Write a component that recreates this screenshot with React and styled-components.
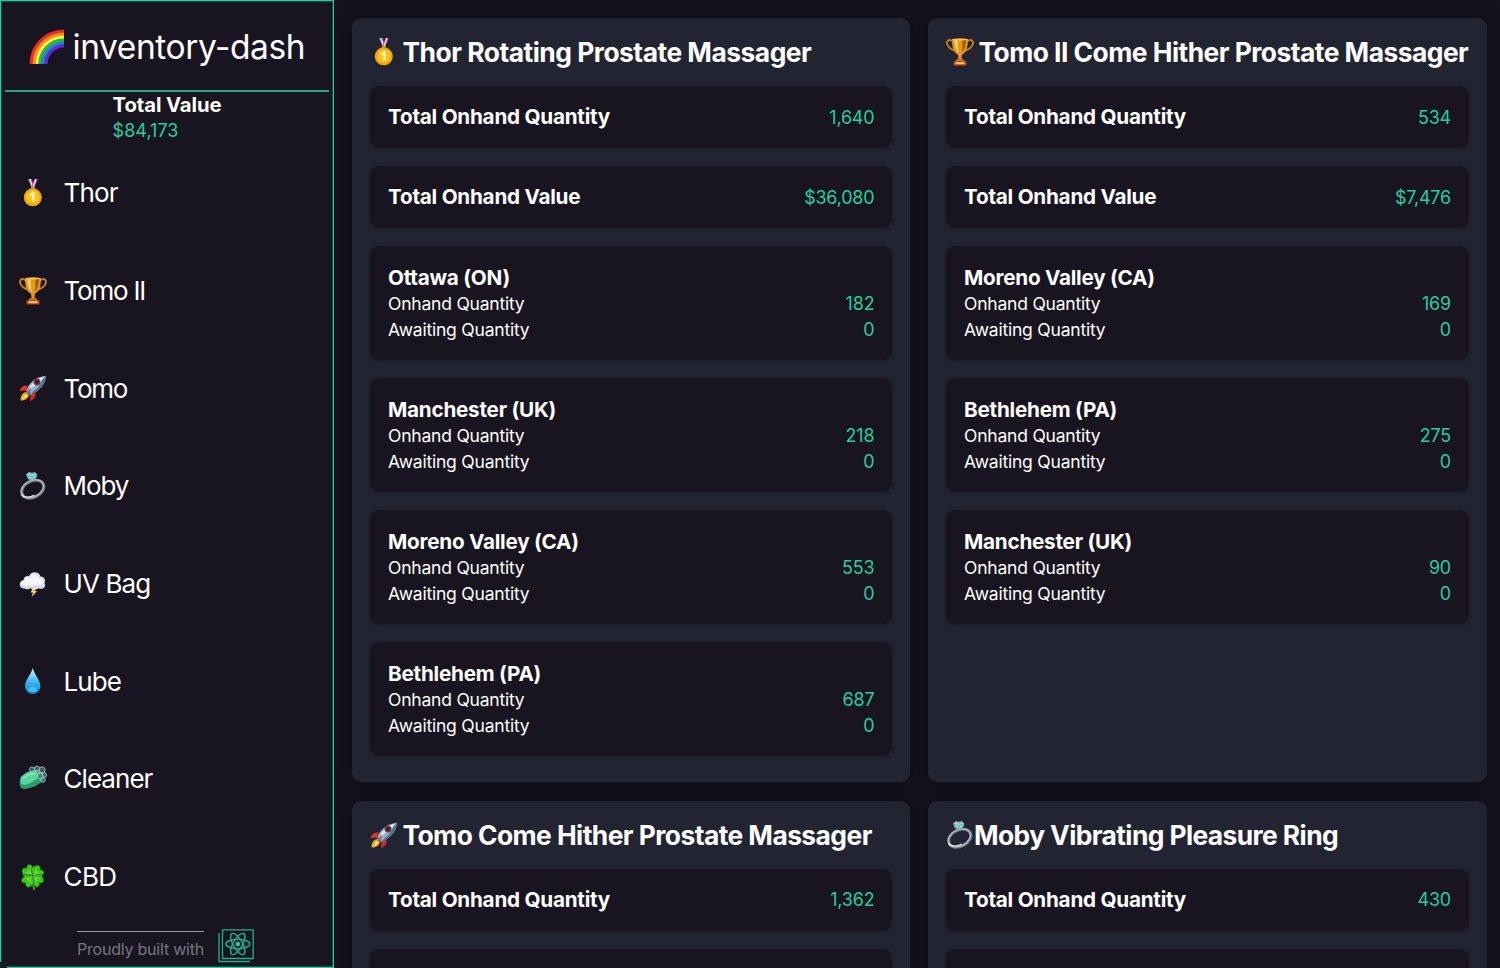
import React from "react";
import styled, { createGlobalStyle } from "styled-components";

const GlobalStyle = createGlobalStyle`
  * { box-sizing: border-box; }
  html, body { margin: 0; height: 968px; overflow: hidden; background: #16131e; }
  h1, h2, h3, p, ul { margin: 0; padding: 0; font-weight: inherit; }
  body { font-family: Inter, "Liberation Sans", sans-serif; color: #fff; }
`;

const teal = "#20cfa0";
const ink = "#181520";

const Page = styled.div`
  display: grid;
  grid-template-columns: 334px 1fr;
  width: 1500px;
  height: 968px;
  overflow: hidden;
`;

const Sidebar = styled.aside`
  position: relative;
  display: flex;
  flex-direction: column;
  padding: 0 4px;
  height: 968px;
  background: ${ink};
  border: 1px solid ${teal};
  box-shadow: inset 0 0 0 1px rgba(32, 207, 160, 0.3);

  &::after {
    content: "";
    position: absolute;
    left: -1px;
    bottom: -1px;
    width: 7px;
    height: 6px;
    background: #16191f;
  }
`;

const Brand = styled.header`
  display: flex;
  align-items: center;
  height: 91px;
  padding: 3px 0 0 24px;
  gap: 7.5px;
  border-bottom: 2px solid #20a48a;
`;

const BrandName = styled.h1`
  font-size: 33.5px;
  line-height: 40px;
  letter-spacing: -0.42px;
  white-space: nowrap;
`;

const Total = styled.section`
  align-self: center;
  height: 52px;
`;

const TotalLabel = styled.h2`
  font-size: 20.3px;
  line-height: 25px;
  font-weight: 700;
  letter-spacing: -0.1px;
`;

const TotalValue = styled.p`
  font-size: 18px;
  line-height: 27px;
  color: ${teal};
  letter-spacing: 0.03px;
`;

const Menu = styled.ul`
  list-style: none;
`;

const MenuItem = styled.li`
  display: flex;
  align-items: center;
  gap: 16.5px;
  height: 97.7px;
  padding-left: 14px;
  font-size: 26px;
  letter-spacing: ${(p) => p.$track}px;
  white-space: nowrap;
`;

const Credit = styled.footer`
  display: flex;
  gap: 14px;
  padding-left: 72px;
  margin-top: 3px;
`;

const CreditText = styled.p`
  height: 32px;
  margin-top: 2px;
  border-top: 1.5px solid #9a98a3;
  padding-top: 7px;
  font-size: 16px;
  line-height: 20px;
  letter-spacing: -0.22px;
  color: #777580;
  white-space: nowrap;
`;

const Board = styled.main`
  display: grid;
  grid-template-columns: 558px 558.6px;
  grid-template-rows: 764px 764px;
  gap: 18.6px 18px;
  padding: 18px;
`;

const Card = styled.section`
  display: flex;
  flex-direction: column;
  gap: 18px;
  padding: 18px;
  border-radius: 9px;
  background: #222432;
  box-shadow: 0 0 14px 2px rgba(8, 7, 14, 0.55);
`;

const CardTitle = styled.h2`
  display: flex;
  align-items: center;
  height: 32px;
  gap: ${(p) => (p.$tight ? 0 : 4.5)}px;
  font-size: 26.4px;
  font-weight: 700;
  letter-spacing: ${(p) => p.$track}px;
  white-space: nowrap;
`;

const Panel = styled.div`
  flex: none;
  height: ${(p) => (p.$tall ? 114 : 62)}px;
  padding: 18px;
  border-radius: 9px;
  background: ${ink};
  box-shadow: 0 1px 5px rgba(16, 14, 24, 0.3);
`;

const Row = styled.div`
  display: flex;
  justify-content: space-between;
  align-items: center;
  height: 26.7px;
`;

const PanelTitle = styled.h3`
  font-size: 20.7px;
  line-height: ${(p) => (p.$place ? 27 : 26)}px;
  margin-bottom: ${(p) => (p.$place ? -1.2 : 0)}px;
  font-weight: 700;
  letter-spacing: -0.24px;
`;

const Label = styled.span`
  font-size: 17.5px;
  letter-spacing: -0.21px;
`;

const Value = styled.span`
  margin-right: -0.4px;
  font-size: 18px;
  color: ${teal};
  letter-spacing: -0.22px;
`;

const Art = styled.svg`
  flex: none;
  display: block;
  overflow: visible;
  width: ${(p) => p.$w || 28}px;
  height: ${(p) => p.$h || 28}px;
`;

function Medal() {
  return (
    <Art viewBox="0 0 28 28">
      <path d="M8.8 0h4l3 9h-3z" fill="#7264b5" />
      <path d="M10 0h1.6l3 9h-1.5z" fill="#f2d4e1" />
      <path d="M18.8 0h-3.3l-3.4 9h3z" fill="#c75386" />
      <path d="M17.5 0h-1.3l-3 9h1.4z" fill="#eee5fa" />
      <rect x="11.6" y="8" width="4.4" height="3" rx="1" fill="#c68a18" />
      <circle cx="13.8" cy="18.3" r="9" fill="#f0a908" />
      <circle cx="13.8" cy="18" r="7.4" fill="#fcc21f" stroke="#e09c08" strokeWidth=".8" />
      <path d="M11.5 16.2l3-2v8" fill="none" stroke="#fff5ad" strokeWidth="2.3" />
    </Art>
  );
}

function Trophy() {
  return (
    <Art viewBox="0 0 28 28">
      <path d="M7 3.6C2-.2-.5 4 2 7.8c1.6 2.6 4.2 4 7.5 5M21 3.6c5-3.8 7.5.4 5 4.2-1.6 2.6-4.2 4-7.5 5" fill="none" stroke="#c87c13" strokeWidth="1.8" />
      <path d="M6 1h16c0 7-1.200 13.500-6.100 15.800L15.400 23h-2.800l-.5-6.200C7.200 14.500 6 8 6 1z" fill="#e5981b" />
      <path d="M8.500 2h3.200c-.2 5 0 9.500 1.300 13C9.500 12.500 8.600 7 8.500 2z" fill="#ffd765" />
      <path d="M16 2h4c-.2 5-1.300 10-4.200 12.500C16.700 10 16.500 6 16 2z" fill="#a95c0d" />
      <ellipse cx="14" cy="1.500" rx="8" ry="1.200" fill="#f7bd43" />
      <path d="M11 21h6l2.500 3.500h-11z" fill="#c57014" />
      <rect x="7.500" y="23.300" width="13" height="4.200" rx=".7" fill="#b64b18" />
      <rect x="9.500" y="24.200" width="9" height="2" fill="#ffc56a" />
    </Art>
  );
}

function Rocket() {
  return (
    <Art viewBox="0 0 28 28">
      <path d="M8.500 11.500C4.500 11 1.500 13 .5 17l6.500-.500z" fill="#e63524" />
      <path d="M16.500 19c.5 4-1.500 6.500-5.500 8l.5-6.500z" fill="#dd251f" />
      <path d="M7 18c-4 1-5.500 4-5.500 8.500C6 26.500 9 25 10 21z" fill="#f5a615" />
      <path d="M7 20c-2 1-3 3-3.500 5C6 24.500 7.500 23 8.500 21z" fill="#fff16a" />
      <path d="M7 17C10 9 16 3 27 1.800 27 10 20 17.500 11 21z" fill="#92b4ce" />
      <path d="M11 12.500C15 7 20 3.500 26 2.500c-2 3-8 8-14.500 12z" fill="#dbe9f2" />
      <path d="M8 16.500c2.500-1 4.500 1 3.500 4l-2 .700-3-3z" fill="#387daf" />
      <path d="M14 17.500c4-2.500 8-7 9.500-12 1-1.200 2-2.500 3.500-3.700C26.800 9 20 17 12 20.500z" fill="#526e91" />
      <circle cx="18" cy="8" r="3.500" fill="#8f3232" />
      <circle cx="18" cy="8" r="2.100" fill="#27233b" />
      <path d="M8 19l3-3" stroke="#e65847" strokeWidth="2" strokeLinecap="round" />
    </Art>
  );
}

function Ring() {
  return (
    <Art viewBox="0 0 28 28">
      <ellipse cx="13.800" cy="17.200" rx="11.800" ry="8.200" transform="rotate(-27 13.8 17.2)" fill="none" stroke="#71757e" strokeWidth="3" />
      <ellipse cx="13.400" cy="16.800" rx="11.700" ry="8.100" transform="rotate(-27 13.4 16.8)" fill="none" stroke="#b4b7bc" strokeWidth="1.500" />
      <path d="M2.500 22c1.500 4 8 4 13 1" fill="none" stroke="#e3e4e5" strokeWidth="1.300" />
      <path d="M7 2.300L10 0l3 .7L16 0l2.500 3-1.200 3-4.500 3.200L8.600 6.700z" fill="#75b8b5" />
      <path d="M8 2.500L11 1l2 2 2-2 2.500 2L13 8z" fill="#b4e5e0" />
      <path d="M8 3l5 1.500L17.500 3M11 1.500l2 6 2-6" fill="none" stroke="#519a99" strokeWidth=".6" />
    </Art>
  );
}

function Storm() {
  return (
    <Art viewBox="0 0 28 28">
      <path d="M14 17h4l-2.500 4h2.600L12.600 27l1.400-4.500h-2.300z" fill="#ecd449" />
      <path d="M5.500 18.500C-.5 19-.8 11 4.500 10 4.500 6.500 8 5.300 10 6.300 11.500 1 20 .8 21.500 6.500c4.300.2 5.500 4.500 4 6.500 2.500 5-3 7-6 5.200-3.500 2.300-6 1.300-8 0-2 1.500-4.500 1.400-6 .3z" fill="#dddbe9" />
      <path d="M4.500 15C0 14 2 10.500 6 11 5 7 9 6.500 11 8c1-5.500 8-5 9 .2 3.500-.5 5 2 3.500 4.800-2 3.500-6 1.500-7 2-3 2.300-6 .5-7 0-1.500 1-3.500.8-5 0z" fill="#f6f4fb" />
    </Art>
  );
}

function Drop() {
  return (
    <Art viewBox="0 0 28 28">
      <defs>
        <linearGradient id="water" x2="0" y2="1">
          <stop stopColor="#d8f5ff" /><stop offset=".5" stopColor="#42b9ef" /><stop offset="1" stopColor="#087fd2" />
        </linearGradient>
      </defs>
      <path d="M13.700 1C12.500 7 6 13 6 19.200a7.700 7.700 0 0 0 15.400 0C21.400 13 15 7 13.700 1z" fill="url(#water)" />
      <ellipse cx="13.700" cy="22.500" rx="4.300" ry="2.800" fill="#34c5f5" />
    </Art>
  );
}

function Soap() {
  return (
    <Art viewBox="0 0 28 28">
      <path d="M1 14.500C.5 10 14 3 18.500 5c5 1 8 5 6.500 9C22 20 7 25.500 3 23.500 0 21 .5 17.500 1 14.500z" fill="#269c70" />
      <path d="M1.500 13.500C3 9.500 14 4 18 6c4 1.800 3 6-1 8.500C12 18 5 22 2 18.500z" fill="#55d69d" />
      <path d="M4 13.500c3-3 8-5 12-5" stroke="#8ce8bf" strokeWidth="1.300" fill="none" />
      <g fill="#487f72" fillOpacity=".7" stroke="#a9c9c3" strokeWidth=".8">
        <circle cx="13" cy="4.500" r="2.500" /><circle cx="18" cy="3.800" r="2.700" /><circle cx="23" cy="5" r="3.200" /><circle cx="25" cy="10" r="2.600" /><circle cx="21" cy="11" r="3" /><circle cx="24" cy="15" r="2.300" /><circle cx="19" cy="7" r="1.800" />
      </g>
    </Art>
  );
}

function Clover() {
  const leaf = "M13.500 13.500C9 12.500 5 8.500 7.500 6 7.500 2 12 1 13.500 4.300 16 1 20 2.500 19 6c2.500 3-1 6.500-5.500 7.500z";
  return (
    <Art viewBox="0 0 28 28">
      <path d="M13 13c1 5 .5 10 2.500 14" fill="none" stroke="#34a51c" strokeWidth="2" />
      {[-38, 50, 134, 224].map((a) => (
        <g key={a} transform={`translate(0 -1) rotate(${a} 13.5 14)`}>
          <path d={leaf} fill="#3cc41f" stroke="#1d6a16" strokeWidth=".7" />
          <path d="M13.500 13V6.500M10.500 7l2 3M16.500 7l-2 3" fill="none" stroke="#84e04a" strokeWidth="1" />
        </g>
      ))}
    </Art>
  );
}

function Rainbow() {
  const bands = ["#ed2925", "#ff8a18", "#fff03a", "#27bd39", "#1688e8", "#6928ca"];
  return (
    <Art viewBox="0 0 36 36" $w={36} $h={36}>
      {bands.map((color, i) => {
        const r = 32.8 - i * 2.95;
        return <path key={color} d={`M${35 - r} 35A${r} ${r} 0 0 1 35 ${35 - r}`} fill="none" stroke={color} strokeWidth="3.3" />;
      })}
    </Art>
  );
}

function ReactBadge() {
  return (
    <Art viewBox="0 0 36 34" $w={36} $h={34} fill="none" stroke="#20ae91" strokeWidth="1.3">
      <path d="M4.500.8h30.700v28.700H4.500zM1 4v28.500h31" />
      <g strokeWidth="1.4">
        {[0, 60, 120].map((a) => <ellipse key={a} cx="19.800" cy="15" rx="12" ry="4.600" transform={`rotate(${a} 19.8 15)`} />)}
      </g>
      <circle cx="19.800" cy="15" r="2.300" fill="#20cfa0" stroke="none" />
    </Art>
  );
}

const menu = [
  [Medal, "Thor", -0.85], [Trophy, "Tomo II", -1.2], [Rocket, "Tomo", -1.3], [Ring, "Moby", -1.1],
  [Storm, "UV Bag", -0.9], [Drop, "Lube", -0.9], [Soap, "Cleaner", -0.95], [Clover, "CBD", -0.6],
];

const products = [
  { Icon: Medal, name: "Thor Rotating Prostate Massager", track: -0.5, quantity: "1,640", value: "$36,080",
    places: [["Ottawa (ON)", 182], ["Manchester (UK)", 218], ["Moreno Valley (CA)", 553], ["Bethlehem (PA)", 687]] },
  { Icon: Trophy, name: "Tomo II Come Hither Prostate Massager", track: -0.53, quantity: "534", value: "$7,476",
    places: [["Moreno Valley (CA)", 169], ["Bethlehem (PA)", 275], ["Manchester (UK)", 90]] },
  { Icon: Rocket, name: "Tomo Come Hither Prostate Massager", track: -0.56, quantity: "1,362", places: [] },
  { Icon: Ring, name: "Moby Vibrating Pleasure Ring", track: -0.6, tight: true, quantity: "430", places: [] },
];

function Product({ Icon, name, track, tight, quantity, value, places }) {
  return (
    <Card>
      <CardTitle $track={track} $tight={tight}><Icon />{name}</CardTitle>
      <Panel><Row><PanelTitle>Total Onhand Quantity</PanelTitle><Value>{quantity}</Value></Row></Panel>
      <Panel>{value && <Row><PanelTitle>Total Onhand Value</PanelTitle><Value>{value}</Value></Row>}</Panel>
      {places.map(([place, onhand]) => (
        <Panel $tall key={place}>
          <PanelTitle $place>{place}</PanelTitle>
          <Row><Label>Onhand Quantity</Label><Value>{onhand}</Value></Row>
          <Row><Label>Awaiting Quantity</Label><Value>0</Value></Row>
        </Panel>
      ))}
    </Card>
  );
}

export default function App() {
  return (
    <>
      <GlobalStyle />
      <Page>
        <Sidebar>
          <Brand><Rainbow /><BrandName>inventory-dash</BrandName></Brand>
          <Total><TotalLabel>Total Value</TotalLabel><TotalValue>$84,173</TotalValue></Total>
          <Menu>{menu.map(([Icon, name, track]) => <MenuItem key={name} $track={track}><Icon />{name}</MenuItem>)}</Menu>
          <Credit><CreditText>Proudly built with</CreditText><ReactBadge /></Credit>
        </Sidebar>
        <Board>{products.map((p) => <Product key={p.name} {...p} />)}</Board>
      </Page>
    </>
  );
}
